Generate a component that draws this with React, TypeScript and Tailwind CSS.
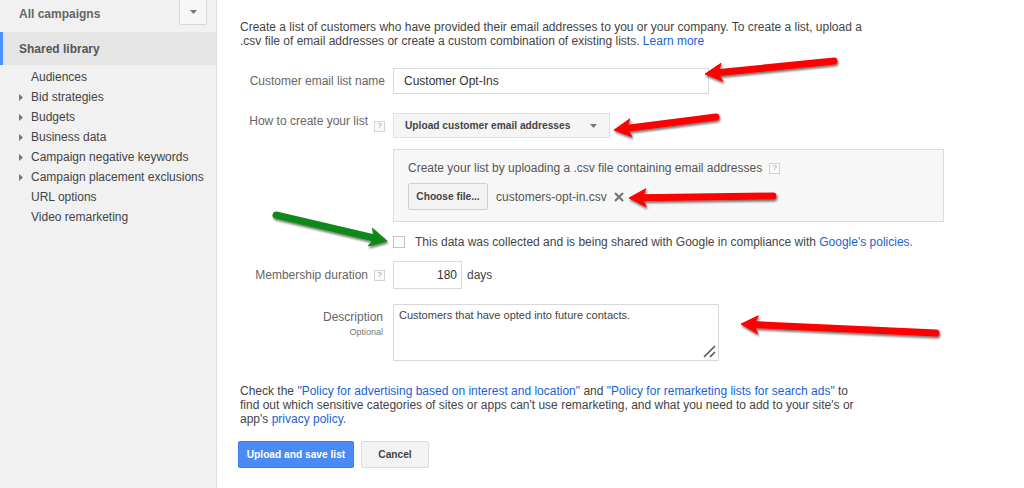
import React from "react";

const font = { fontFamily: '"Liberation Sans", Arial, sans-serif' };

function Caret({ className = "" }: { className?: string }) {
  return (
    <svg width="7" height="4" viewBox="0 0 7 4" className={className}>
      <path d="M0 0 L7 0 L3.5 4 Z" fill="#777" />
    </svg>
  );
}

function Tri() {
  return (
    <svg width="4" height="7" viewBox="0 0 4 7" className="shrink-0">
      <path d="M0 0 L4 3.5 L0 7 Z" fill="#777" />
    </svg>
  );
}

function Help() {
  return (
    <span className="inline-flex h-[11px] w-[11px] items-center justify-center border border-[#d3d3d3] bg-[#fafafa] text-[8px] leading-none text-[#999]">
      ?
    </span>
  );
}

type Pt = [number, number];

function Arrow({ from, to, color }: { from: Pt; to: Pt; color: string }) {
  const [x1, y1] = from;
  const [x2, y2] = to;
  const dx = x2 - x1;
  const dy = y2 - y1;
  const len = Math.hypot(dx, dy);
  const ux = dx / len;
  const uy = dy / len;
  const nx = -uy;
  const ny = ux;
  const L = 17;
  const W = 9;
  const bx = x2 - ux * L;
  const by = y2 - uy * L;
  const head = `${x2},${y2} ${bx + nx * W},${by + ny * W} ${bx + ux * 4},${by + uy * 4} ${bx - nx * W},${by - ny * W}`;
  return (
    <g filter="url(#sh)">
      <line
        x1={x1}
        y1={y1}
        x2={bx + ux * 5}
        y2={by + uy * 5}
        stroke={color}
        strokeWidth={7}
        strokeLinecap="round"
      />
      <polygon points={head} fill={color} strokeLinejoin="round" stroke={color} strokeWidth={1} />
    </g>
  );
}

export default function App() {
  const navItems: { label: string; tri: boolean }[] = [
    { label: "Audiences", tri: false },
    { label: "Bid strategies", tri: true },
    { label: "Budgets", tri: true },
    { label: "Business data", tri: true },
    { label: "Campaign negative keywords", tri: true },
    { label: "Campaign placement exclusions", tri: true },
    { label: "URL options", tri: false },
    { label: "Video remarketing", tri: false },
  ];

  return (
    <div
      className="relative flex h-[488px] w-[1024px] overflow-hidden bg-white text-[12px] text-[#444]"
      style={font}
    >
      {/* Sidebar */}
      <aside className="flex w-[217px] shrink-0 flex-col border-r border-[#e0e0e0] bg-[#f1f1f1]">
        <div className="flex h-[32px] items-start justify-between pl-[19px] pr-[9px]">
          <span className="pt-[6px] text-[12px] font-bold leading-[16px] text-[#666]">All campaigns</span>
          <div className="flex h-[25px] w-[28px] items-center justify-center rounded-b-[2px] border border-t-0 border-[#d8d8d8] bg-[#f7f7f7]">
            <Caret />
          </div>
        </div>
        <div className="flex h-[33px] items-center border-l-[3px] border-[#4d90fe] bg-[#e5e5e5] pl-[16px]">
          <span className="text-[12px] font-bold text-[#555]">Shared library</span>
        </div>
        <ul className="pt-[2px]">
          {navItems.map((it) => (
            <li
              key={it.label}
              className="flex h-[20px] items-center whitespace-nowrap pl-[19px] text-[12px] leading-[20px] text-[#444]"
            >
              <span className="flex w-[12px] items-center">{it.tri ? <Tri /> : null}</span>
              <span>{it.label}</span>
            </li>
          ))}
        </ul>
      </aside>

      {/* Main */}
      <main className="flex-1 pl-[23px] pt-[20px]">
        <p className="whitespace-nowrap leading-[14px] text-[#444]">
          Create a list of customers who have provided their email addresses to you or your company. To create a list, upload a
          <br />
          .csv file of email addresses or create a custom combination of existing lists.{" "}
          <span className="text-[#1a5fd0]">Learn more</span>
        </p>

        <div className="mt-[20px] grid grid-cols-[145px_1fr] gap-x-[8px]">
          {/* Name */}
          <div className="flex h-[26px] items-center justify-end whitespace-nowrap text-[#666]">
            Customer email list name
          </div>
          <div className="flex h-[26px] w-[316px] items-center border border-[#d9d9d9] pl-[10px] text-[#333]">
            Customer Opt-Ins
          </div>

          {/* How to create */}
          <div className="mt-[19px] flex items-start justify-end gap-[6px] whitespace-nowrap text-[#666]">
            <span className="leading-[16px]">How to create your list</span>
            <span className="pt-[2px]">
              <Help />
            </span>
          </div>
          <div className="mt-[19px]">
            <div className="flex h-[25px] w-[217px] items-center justify-between border border-[#e0e0e0] bg-[#f5f5f5] pl-[11px] pr-[12px] text-[10.2px] font-bold text-[#444]">
              <span>Upload customer email addresses</span>
              <Caret />
            </div>
            <div className="mt-[11px] w-[551px] border border-[#dcdcdc] bg-[#f7f7f7] pb-[11px] pl-[14px] pt-[10px]">
              <div className="flex items-center gap-[7px] leading-[16px] text-[#555]">
                <span>Create your list by uploading a .csv file containing email addresses</span>
                <Help />
              </div>
              <div className="mt-[7px] flex items-center">
                <div className="flex h-[27px] w-[80px] items-center justify-center rounded-[2px] border border-[#d0d0d0] bg-[#f3f3f3] text-[10.2px] font-bold text-[#444]">
                  Choose file...
                </div>
                <span className="ml-[8px] text-[#555]">customers-opt-in.csv</span>
                <svg width="10" height="10" viewBox="0 0 10 10" className="ml-[7px]">
                  <path d="M1 1 L9 9 M9 1 L1 9" stroke="#777" strokeWidth="2.2" />
                </svg>
              </div>
            </div>
          </div>

          {/* Checkbox */}
          <div />
          <div className="mt-[13px] flex h-[14px] items-center whitespace-nowrap">
            <span className="h-[12px] w-[12px] border border-[#c4c4c4] bg-white" />
            <span className="ml-[10px] text-[#444]">
              This data was collected and is being shared with Google in compliance with{" "}
              <span className="text-[#1a5fd0]">Google's policies.</span>
            </span>
          </div>

          {/* Membership */}
          <div className="mt-[12px] flex h-[28px] items-center justify-end gap-[6px] whitespace-nowrap text-[#666]">
            <span>Membership duration</span>
            <Help />
          </div>
          <div className="mt-[12px] flex items-center">
            <div className="flex h-[28px] w-[69px] items-center justify-end border border-[#d9d9d9] pr-[4px] text-[#333]">
              180
            </div>
            <span className="ml-[5px] text-[#444]">days</span>
          </div>

          {/* Description */}
          <div className="mt-[15px] flex flex-col items-end pr-[2px] pt-[5px] text-[#666]">
            <span className="leading-[16px]">Description</span>
            <span className="text-[9px] leading-[14px] text-[#777]">Optional</span>
          </div>
          <div className="relative mt-[15px] h-[57px] w-[326px] border border-[#d9d9d9] pl-[5px] pt-[2px] text-[11px] text-[#444]">
            Customers that have opted into future contacts.
            <svg width="14" height="14" viewBox="0 0 14 14" className="absolute bottom-[2px] right-[2px]">
              <path d="M2 13 L13 2 M8 13 L13 8" stroke="#555" strokeWidth="1.6" />
            </svg>
          </div>
        </div>

        <p className="mt-[23px] whitespace-nowrap leading-[14px] text-[#444]">
          Check the <span className="text-[#1a5fd0]">"Policy for advertising based on interest and location"</span> and{" "}
          <span className="text-[#1a5fd0]">"Policy for remarketing lists for search ads"</span> to
          <br />
          find out which sensitive categories of sites or apps can't use remarketing, and what you need to add to your site's or
          <br />
          app's <span className="text-[#1a5fd0]">privacy policy</span>.
        </p>

        <div className="-ml-[2px] mt-[15px] flex gap-[7px]">
          <div className="flex h-[27px] w-[116px] items-center justify-center rounded-[2px] border border-[#3b7ded] bg-[#4a8af4] text-[10.2px] font-bold text-white">
            Upload and save list
          </div>
          <div className="flex h-[27px] w-[68px] items-center justify-center rounded-[2px] border border-[#dcdcdc] bg-[#f3f3f3] text-[10.2px] font-bold text-[#444]">
            Cancel
          </div>
        </div>
      </main>

      {/* Annotation arrows */}
      <svg className="pointer-events-none absolute left-0 top-0" width="1024" height="488" viewBox="0 0 1024 488">
        <defs>
          <filter id="sh" x="-20%" y="-50%" width="140%" height="200%">
            <feDropShadow dx="1" dy="2" stdDeviation="1.3" floodColor="#000" floodOpacity="0.55" />
          </filter>
        </defs>
        <Arrow from={[834, 61]} to={[705, 74]} color="#f00" />
        <Arrow from={[716, 117]} to={[614, 130]} color="#f00" />
        <Arrow from={[773, 196]} to={[629, 198]} color="#f00" />
        <Arrow from={[936, 333]} to={[741, 324]} color="#f00" />
        <Arrow from={[276, 215]} to={[387, 241]} color="#11891a" />
      </svg>
    </div>
  );
}
